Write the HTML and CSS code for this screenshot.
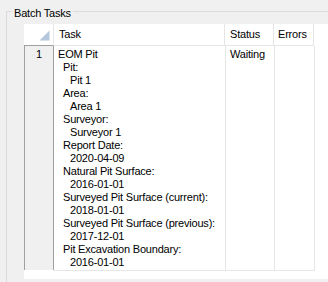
FILE: index.html
```html
<!DOCTYPE html>
<html>
<head>
<meta charset="utf-8">
<link rel="stylesheet" href="styles.css">
</head>
<body>
<fieldset class="group">
  <legend class="group-title">Batch Tasks</legend>
  <div class="grid">
    <div class="row head">
      <div class="cell corner"><svg class="glyph" width="11" height="11" viewBox="0 0 11 11"><polygon points="10.5,0.5 10.5,10.5 0.5,10.5" fill="#b4c6d9"/></svg></div>
      <div class="cell hc h-task">Task</div>
      <div class="cell hc h-status">Status</div>
      <div class="cell hc h-errors">Errors</div>
    </div>
    <div class="row body-row">
      <div class="cell rowhead">1</div>
      <div class="cell bc b-task">
        <div class="l0">EOM Pit</div>
        <div class="l1">Pit:</div>
        <div class="l2">Pit 1</div>
        <div class="l1">Area:</div>
        <div class="l2">Area 1</div>
        <div class="l1">Surveyor:</div>
        <div class="l2">Surveyor 1</div>
        <div class="l1">Report Date:</div>
        <div class="l2">2020-04-09</div>
        <div class="l1">Natural Pit Surface:</div>
        <div class="l2">2016-01-01</div>
        <div class="l1">Surveyed Pit Surface (current):</div>
        <div class="l2">2018-01-01</div>
        <div class="l1">Surveyed Pit Surface (previous):</div>
        <div class="l2">2017-12-01</div>
        <div class="l1">Pit Excavation Boundary:</div>
        <div class="l2">2016-01-01</div>
      </div>
      <div class="cell bc b-status">Waiting</div>
      <div class="cell bc b-errors"></div>
    </div>
  </div>
</fieldset>
</body>
</html>
```

FILE: styles.css
```css
html, body {
  margin: 0;
  padding: 0;
  overflow: hidden;
  background: #f0f0f0;
}
body {
  width: 328px;
  height: 282px;
  font-family: "Liberation Sans", Arial, sans-serif;
  font-size: 11px;
  line-height: 13px;
  letter-spacing: -0.2px;
  color: #000;
}
.group {
  margin: 3px 0 0 6px;
  padding: 0 0 0 17px;
  border: 1px solid #dcdcdc;
  border-right: 0;
  border-bottom: 0;
  width: 322px;
  height: 279px;
  box-sizing: border-box;
  min-width: 0;
  overflow: hidden;
}
.group-title {
  margin-left: -12px;
  padding: 4px 2px 0;
  line-height: 13px;
}
.grid {
  margin-top: 4px;
  background: #fff;
  height: 255px;
  overflow: hidden;
}
.row {
  display: flex;
}
.cell {
  box-sizing: border-box;
  white-space: nowrap;
  flex: none;
}
.head .cell {
  height: 22px;
  border-bottom: 1px solid #e6e6e6;
}
.corner {
  width: 30px;
  border-right: 1px solid #e6e6e6;
}
.head .corner {
  border-bottom-color: #a0a0a0;
}
.glyph {
  display: block;
  margin: 6px 0 0 15px;
}
.hc {
  padding: 4px 0 0 5px;
  border-right: 1px solid #e6e6e6;
}
.h-task { width: 171px; }
.h-status { width: 49px; }
.h-errors { width: 40px; padding-left: 4px; }
.rowhead {
  width: 30px;
  height: 224px;
  background: #f0f0f0;
  border-left: 1px solid #a0a0a0;
  border-right: 1px solid #a0a0a0;
  text-align: center;
  padding-top: 2px;
}
.bc {
  height: 225px;
  padding: 2px 0 1px 4px;
  border-right: 1px solid #e6e6e6;
  border-bottom: 1px solid #e6e6e6;
}
.b-task { width: 172px; }
.b-status { width: 49px; }
.b-errors { width: 40px; }
.l1 { padding-left: 5px; }
.l2 { padding-left: 12px; }
```
